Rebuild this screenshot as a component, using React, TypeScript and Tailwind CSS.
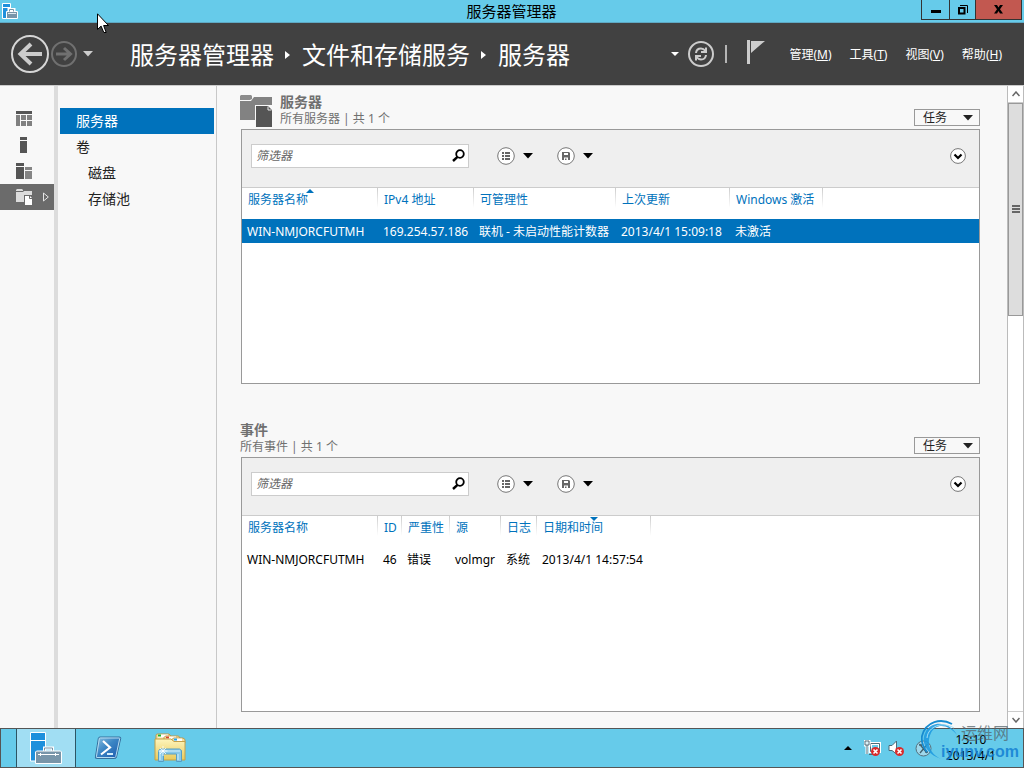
import React from 'react';
import clsx from 'clsx';

type Column = {
  label: string;
  width: string;
  sort?: 'asc' | 'desc';
};

type PanelProps = {
  title: string;
  subtitle: string;
  icon?: React.ReactNode;
  columns: Column[];
  rows: string[][];
  selectedRow?: number;
};

const serverColumns: Column[] = [
  { label: '服务器名称', width: 'w-[136px]', sort: 'asc' },
  { label: 'IPv4 地址', width: 'w-[96px]' },
  { label: '可管理性', width: 'w-[142px]' },
  { label: '上次更新', width: 'w-[114px]' },
  { label: 'Windows 激活', width: 'w-[93px]' },
];

const serverRows = [
  ['WIN-NMJORCFUTMH', '169.254.57.186', '联机 - 未启动性能计数器', '2013/4/1 15:09:18', '未激活'],
];

const eventColumns: Column[] = [
  { label: '服务器名称', width: 'w-[136px]' },
  { label: 'ID', width: 'w-[24px]' },
  { label: '严重性', width: 'w-[48px]' },
  { label: '源', width: 'w-[51px]' },
  { label: '日志', width: 'w-[36px]' },
  { label: '日期和时间', width: 'w-[114px]', sort: 'desc' },
];

const eventRows = [['WIN-NMJORCFUTMH', '46', '错误', 'volmgr', '系统', '2013/4/1 14:57:54']];

const menus = [
  { label: '管理', accessKey: 'M' },
  { label: '工具', accessKey: 'T' },
  { label: '视图', accessKey: 'V' },
  { label: '帮助', accessKey: 'H' },
];

const navItems = [
  { label: '服务器', selected: true },
  { label: '卷' },
  { label: '磁盘', nested: true },
  { label: '存储池', nested: true },
];

const Caret: React.FC<{ className?: string }> = ({ className }) => (
  <svg className={className} width="10" height="6" viewBox="0 0 10 6" fill="currentColor">
    <path d="M0 0h10L5 5.500z" />
  </svg>
);

const CrumbArrow: React.FC = () => (
  <svg width="6" height="8" viewBox="0 0 6 8" fill="#fff">
    <path d="M0 0l5 4-5 4z" />
  </svg>
);

const ServerManagerIcon: React.FC = () => (
  <svg width="32" height="32" viewBox="0 0 32 32">
    <path d="M.5.5h15V29H.5z" fill="#1e90dc" stroke="#fff" />
    <path d="M.5 8.500h15" stroke="#fff" />
    <path d="M14.500 19v-3h8v3" fill="none" stroke="#fff" strokeWidth="3" />
    <path d="M14.500 19v-3h8v3" fill="none" stroke="#7895a9" />
    <path d="M5.500 20l1-1h24l1 1v11.500h-26z" fill="#7895a9" stroke="#fff" />
    <path d="M8 22.500h21M10.500 21v3M25.500 21v3" stroke="#fff" />
  </svg>
);

const ServerManagerSmallIcon: React.FC = () => (
  <svg width="16" height="16" viewBox="0 0 16 16">
    <path d="M.5.5h8v15h-8z" fill="#1e90dc" stroke="#fff" />
    <path d="M.5 4.500h8" stroke="#fff" />
    <path d="M7 8V6.500h5V8" fill="none" stroke="#fff" strokeWidth="3" />
    <path d="M4.500 8.500h11v7h-11z" fill="#7895a9" stroke="#fff" />
    <path d="M7.500 8.500v-2h4v2" fill="none" stroke="#7895a9" />
    <path d="M6 10.500h8" stroke="#dfe8ee" />
  </svg>
);

const PowerShellIcon: React.FC = () => (
  <svg width="30" height="26" viewBox="0 0 30 26">
    <defs>
      <linearGradient id="ps" x1="0" y1="0" x2="1" y2="1">
        <stop offset="0" stopColor="#8ec3e4" />
        <stop offset=".45" stopColor="#3b86c4" />
        <stop offset="1" stopColor="#1b56ad" />
      </linearGradient>
    </defs>
    <path d="M7 2h19.500q1.500 0 1.200 1.500L23.500 22q-.4 1.500-2 1.500H3.500Q2 23.500 2.400 22L5.300 3.500Q5.600 2 7 2z" fill="url(#ps)" stroke="#356f9c" />
    <path d="M7.300 3h18.900q.6 0 .5.600L22.800 21.500q-.2 1-1.200 1H3.900q-.6 0-.5-.7L6.300 3.800q.1-.8 1-.8z" fill="none" stroke="#b5dcf1" />
    <path d="M10 6l7 6.500-9 7" fill="none" stroke="#fff" strokeWidth="2.200" />
    <path d="M14 19h6" stroke="#d5edf9" strokeWidth="2" />
  </svg>
);

const ExplorerIcon: React.FC = () => (
  <svg width="32" height="30" viewBox="0 0 32 30">
    <defs>
      <linearGradient id="folder" x1="0" y1="0" x2="0" y2="1">
        <stop offset="0" stopColor="#fdf5bd" />
        <stop offset="1" stopColor="#e8ca5b" />
      </linearGradient>
    </defs>
    <path d="M2 8V2.500Q2 1 3.500 1H15l2 2v5z" fill="#f5dfa0" stroke="#bd9a4d" />
    <path d="M4 1.500h10v3H4z" fill="#fff" />
    <path d="M4 1.500h3v2H4z" fill="#1db52c" />
    <path d="M10 9V4.500L11.500 3h13l1.500 2v5z" fill="#f5dfa0" stroke="#bd9a4d" />
    <path d="M12 3.500h10v3H12z" fill="#fff" />
    <path d="M12 3.500h3v2h-3z" fill="#d8472a" />
    <path d="M18 10V6.500L19.500 5H29l2 1.500V10z" fill="#f5dfa0" stroke="#bd9a4d" />
    <path d="M20 5.500h8v3h-8z" fill="#fff" />
    <path d="M20 5.500h3v2h-3z" fill="#1ea5ed" />
    <path d="M1 6h16l3 2.500h11V27H1z" fill="url(#folder)" stroke="#c4a048" />
    <path d="M4.500 28.500v-11l2-1.500h19l2 1.500v11h-5V21h-13v7.500z" fill="#88c9e8" stroke="#579ec4" />
    <path d="M6 18h20M6 18v9M24 21v6" stroke="#d4f0fb" />
    <path d="M9 13v10M4.500 18h9M6 15l6 6M12 15l-6 6" stroke="#fff" strokeWidth=".8" />
  </svg>
);

const DashboardIcon: React.FC = () => (
  <svg width="16" height="16" viewBox="0 0 16 16" fill="#808080">
    <path d="M0 0h16v3H0z" fill="#555" />
    <path d="M0 4h4v11H0zM5 4h5v5H5zM11 4h5v5h-5zM5 10h5v5H5zM11 10h5v5h-5z" />
  </svg>
);

const LocalServerIcon: React.FC = () => (
  <svg width="16" height="16" viewBox="0 0 16 16" fill="#555">
    <path d="M4 0h7v3H4zM4 4h7v12H4z" />
  </svg>
);

const AllServersIcon: React.FC = () => (
  <svg width="16" height="16" viewBox="0 0 16 16">
    <path d="M0 0h8v3H0zM0 4h8v12H0z" fill="#555" />
    <path d="M9 4h7v3H9zM9 8h7v8H9z" fill="#858585" />
  </svg>
);

const StorageIcon: React.FC = () => (
  <svg width="16" height="16" viewBox="0 0 16 16">
    <path d="M0 1l1-1h5l1 1v1H0zM0 3h7l1-1h8v4H8v7H0z" fill="#dcdcdc" />
    <path d="M9 7h5l2 2v7H9z" fill="#fff" />
    <path d="M13.500 7v2.500H16" fill="none" stroke="#6b6b6b" />
  </svg>
);

const StorageLargeIcon: React.FC = () => (
  <svg width="32" height="32" viewBox="0 0 32 32">
    <path d="M0 1l1-1h10l1 1v3l-2 1H0z" fill="#8c8c8c" />
    <path d="M0 6h11l3-4h18v8H15v15H0z" fill="#828282" />
    <path d="M16 11h12l4 4v17H16z" fill="#555" />
    <path d="M28 11.500v3.500h3.500" fill="none" stroke="#e8e8e8" />
  </svg>
);

const railItems = [
  { name: '仪表板', icon: <DashboardIcon /> },
  { name: '本地服务器', icon: <LocalServerIcon /> },
  { name: '所有服务器', icon: <AllServersIcon /> },
  { name: '文件和存储服务', icon: <StorageIcon />, selected: true },
];

const TitleBar: React.FC = () => (
  <header className="relative flex h-[23px] shrink-0 items-start border-b border-[#5fa9c4] bg-[#66cbea]">
    <div className="pl-[2px] pt-[3px]">
      <ServerManagerSmallIcon />
    </div>
    <h1 className="flex-1 pl-[84px] text-center text-[15px] leading-[23px] text-black">服务器管理器</h1>
    <div className="mr-[2px] flex h-5 border border-t-0 border-[#333]">
      <button type="button" aria-label="最小化" className="flex w-7 items-center justify-center border-r border-[#333]">
        <svg width="10" height="10" viewBox="0 0 10 10">
          <path d="M0 5h10v3H0z" />
        </svg>
      </button>
      <button type="button" aria-label="还原" className="flex w-[26px] items-center justify-center border-r border-[#333]">
        <svg width="10" height="10" viewBox="0 0 10 10" fill="none" stroke="#000">
          <path d="M1 3h5.500v5.500H1z" strokeWidth="2" />
          <path d="M2 .5h7.500V8" />
        </svg>
      </button>
      <button type="button" aria-label="关闭" className="flex w-[45px] items-center justify-center bg-[#c25850]">
        <svg width="9" height="9" viewBox="0 0 9 9">
          <path d="M0 0h3l1.500 2.500L6 0h3L6 4.300 9 8.500H6L4.500 6 3 8.500H0l3-4.200z" />
        </svg>
      </button>
    </div>
    <svg className="absolute left-[97px] top-[13px] z-10" width="12" height="21" viewBox="0 0 12 21">
      <path d="M.5.8v15.700l3.600-3.400 2.700 6.400h2.400L6.600 12.500h4.900z" fill="#fff" stroke="#000" />
    </svg>
  </header>
);

const CommandBar: React.FC = () => (
  <div className="flex h-[63px] shrink-0 items-center border-b border-[#ccc] bg-[#414141] pl-[11px] pr-[22px] text-white">
    <button type="button" aria-label="后退">
      <svg width="38" height="38" viewBox="0 0 38 38" fill="none">
        <circle cx="19" cy="19" r="18" stroke="#d6d6d6" strokeWidth="2" />
        <path d="M31 19H9M20 9L9.500 19 20 29" stroke="#ccc" strokeWidth="4" />
      </svg>
    </button>
    <button type="button" aria-label="前进" className="ml-[2px]">
      <svg width="26" height="26" viewBox="0 0 26 26" fill="none" stroke="#707070">
        <circle cx="13" cy="13" r="12" strokeWidth="2" />
        <path d="M5 13h14M13 7l6.500 6-6.500 6" strokeWidth="3" />
      </svg>
    </button>
    <button type="button" aria-label="历史记录" className="ml-[6px]">
      <Caret className="text-[#ccc]" />
    </button>
    <nav className="ml-9 flex items-center pt-[2px] pl-px whitespace-nowrap text-2xl">
      <a href="#dashboard">服务器管理器</a>
      <span className="flex w-7 justify-center"><CrumbArrow /></span>
      <a href="#storage">文件和存储服务</a>
      <span className="flex w-7 justify-center"><CrumbArrow /></span>
      <a href="#servers">服务器</a>
    </nav>
    <div className="ml-auto flex items-center">
      <button type="button" aria-label="更多">
        <svg width="8" height="4" viewBox="0 0 8 4" fill="#fff">
          <path d="M0 0h8L4 4z" />
        </svg>
      </button>
      <button type="button" aria-label="刷新" className="ml-[9px]">
        <svg width="26" height="26" viewBox="0 0 26 26" fill="none" stroke="#ccc">
          <circle cx="13" cy="13" r="12" strokeWidth="2" />
          <path d="M8 12q.5-4.500 5-4.500 2.500 0 4.500 2.500M18 14q-.5 4.500-5 4.500-2.500 0-4.500-2.500" strokeWidth="2" />
          <path d="M18 6.500v4.500h-5M8 19.500V15h5" strokeWidth="2" />
        </svg>
      </button>
      <span className="ml-[11px] h-[18px] w-[2px] bg-[#b5b5b5]" />
      <button type="button" aria-label="通知" className="ml-5">
        <svg width="18" height="30" viewBox="0 0 18 30" fill="#ccc">
          <path d="M0 1h3v24H0zM4 2h14L4 14z" />
        </svg>
      </button>
      <ul className="ml-6 flex gap-[18px] pt-[2px] text-xs">
        {menus.map(menu => (
          <li key={menu.accessKey}>
            <button type="button" className="whitespace-nowrap">
              {menu.label}(<u>{menu.accessKey}</u>)
            </button>
          </li>
        ))}
      </ul>
    </div>
  </div>
);

const SideBar: React.FC = () => (
  <>
    <ul className="w-[54px] shrink-0 pt-5">
      {railItems.map(item => (
        <li key={item.name}>
          <button
            type="button"
            aria-label={item.name}
            className={clsx('flex h-[26px] w-full items-center pl-4', item.selected && 'bg-[#6b6b6b]')}
          >
            {item.icon}
            {item.selected && (
              <svg className="ml-[11px]" width="6" height="10" viewBox="0 0 6 10" fill="none" stroke="#e5e5e5">
                <path d="M.5 1v8L5.300 5z" />
              </svg>
            )}
          </button>
        </li>
      ))}
    </ul>
    <nav className="w-[163px] shrink-0 border-l-4 border-r border-l-[#dcdcdc] border-r-[#c8c8c8] px-[2px] pt-[22px] text-sm">
      {navItems.map(item => (
        <a
          key={item.label}
          href="#nav"
          className={clsx(
            'block h-[26px] leading-[26px]',
            item.nested ? 'pl-7' : 'pl-4',
            item.selected ? 'bg-[#0072bc] text-white' : 'text-[#222]',
          )}
        >
          {item.label}
        </a>
      ))}
    </nav>
  </>
);

const FilterBar: React.FC<{ name: string }> = ({ name }) => (
  <div className="flex h-[58px] shrink-0 items-center border-b border-[#ccc] bg-[#efefef] pb-[6px] pl-[9px] pr-[13px]">
    <div className="flex h-6 w-[218px] items-center border border-[#ccc] bg-white pr-[3px]">
      <input
        type="text"
        aria-label={`${name}筛选器`}
        placeholder="筛选器"
        className="min-w-0 flex-1 pl-1 text-xs italic outline-none placeholder:text-[#666]"
      />
      <button type="button" aria-label="搜索">
        <svg width="13" height="13" viewBox="0 0 13 13" fill="none" stroke="#000">
          <circle cx="8" cy="5" r="3.800" strokeWidth="1.800" />
          <path d="M5.500 7.800L1 12" strokeWidth="2.400" />
        </svg>
      </button>
    </div>
    <button type="button" aria-label="视图选项" className="ml-7 flex items-center gap-2">
      <svg width="18" height="18" viewBox="0 0 18 18">
        <circle cx="9" cy="9" r="8.300" fill="#fff" stroke="#777" />
        <path d="M5 5h2v2H5zM8 5h5v2H8zM5 8h2v2H5zM8 8h5v2H8zM5 11h2v2H5zM8 11h5v2H8z" fill="#666" />
      </svg>
      <Caret />
    </button>
    <button type="button" aria-label="保存查询" className="ml-6 flex items-center gap-2">
      <svg width="18" height="18" viewBox="0 0 18 18">
        <circle cx="9" cy="9" r="8.300" fill="#fff" stroke="#777" />
        <path d="M5 5h7l1 1v7H5z" fill="#666" />
        <path d="M7 6h4v2H7zM7 10.500h4V13H9.500v-1.500H8V13H7z" fill="#fff" />
      </svg>
      <Caret />
    </button>
    <button type="button" aria-label="展开" className="ml-auto">
      <svg width="16" height="16" viewBox="0 0 16 16" fill="none">
        <circle cx="8" cy="8" r="7.400" fill="#fff" stroke="#777" />
        <path d="M4.500 6.500L8 10l3.500-3.500" stroke="#000" strokeWidth="2.200" />
      </svg>
    </button>
  </div>
);

const Panel: React.FC<PanelProps> = ({ title, subtitle, icon, columns, rows, selectedRow }) => (
  <section className="flex min-h-0 flex-1 flex-col">
    <div className="flex h-[35px] shrink-0 items-start text-[#707070]">
      {icon && <div className="mr-2 pt-px">{icon}</div>}
      <div>
        <h2 className="text-sm leading-4 font-bold">{title}</h2>
        <p className="text-xs leading-[18px]">{subtitle}</p>
      </div>
      <button
        type="button"
        className="mt-[15px] ml-auto flex h-[17px] w-[66px] items-center justify-between border border-[#999] bg-[#f8f8f8] pl-2 pr-[6px] text-xs leading-[15px] text-[#222]"
      >
        任务
        <Caret />
      </button>
    </div>
    <div className="ml-px flex min-h-0 flex-1 flex-col border border-[#999] bg-white">
      <FilterBar name={title} />
      <table className="w-full table-fixed text-left text-xs text-black">
        <thead>
          <tr className="h-[31px] align-top text-[#0072bc]">
            {columns.map(column => (
              <th
                key={column.label}
                className={clsx(
                  'relative bg-[linear-gradient(to_bottom,#ccc,#fff)] bg-[length:1px_20px] bg-right-top bg-no-repeat pt-1 pl-[6px] font-normal whitespace-nowrap',
                  column.width,
                )}
              >
                {column.label}
                {column.sort && (
                  <svg
                    className={clsx('absolute top-px left-1/2 -translate-x-1/2', column.sort === 'desc' && 'rotate-180')}
                    width="8"
                    height="4"
                    viewBox="0 0 8 4"
                    fill="#0072bc"
                  >
                    <path d="M0 4h8L4 0z" />
                  </svg>
                )}
              </th>
            ))}
            <th />
          </tr>
        </thead>
        <tbody>
          {rows.map((row, index) => (
            <tr key={row[0]} className={clsx('h-6', index === selectedRow && 'bg-[#0072bc] text-white')}>
              {row.map(cell => (
                <td key={cell} className="pt-[2px] pl-[5px] whitespace-nowrap">
                  {cell}
                </td>
              ))}
              <td />
            </tr>
          ))}
        </tbody>
      </table>
    </div>
  </section>
);

const ScrollBar: React.FC = () => (
  <div className="flex w-[17px] shrink-0 flex-col border-x border-[#bbb] bg-white">
    <button type="button" aria-label="向上滚动" className="flex h-[17px] shrink-0 items-center justify-center border-b border-[#ccc]">
      <svg width="8" height="6" viewBox="0 0 8 6" fill="none" stroke="#666" strokeWidth="1.500">
        <path d="M.5 5L4 1l3.500 4" />
      </svg>
    </button>
    <div className="min-h-0 flex-1">
      <div className="flex h-[35%] flex-col items-center justify-center gap-px border border-[#999] bg-[#ddd]">
        <span className="h-[2px] w-2 bg-[#666]" />
        <span className="h-[2px] w-2 bg-[#666]" />
        <span className="h-[2px] w-2 bg-[#666]" />
      </div>
    </div>
    <button type="button" aria-label="向下滚动" className="flex h-[17px] shrink-0 items-center justify-center border-t border-[#ccc]">
      <svg width="8" height="6" viewBox="0 0 8 6" fill="none" stroke="#666" strokeWidth="1.500">
        <path d="M.5 1L4 5l3.500-4" />
      </svg>
    </button>
  </div>
);

const ErrorBadge: React.FC = () => (
  <>
    <circle cx="11.500" cy="11.500" r="4.500" fill="#d92b2b" />
    <path d="M9.500 9.500l4 4M13.500 9.500l-4 4" stroke="#fff" strokeWidth="1.600" />
  </>
);

const TaskBar: React.FC = () => (
  <footer className="relative flex h-10 shrink-0 border border-[#555] bg-[#66cbea]">
    <div className="ml-[15px] flex gap-[2px]">
      <button type="button" aria-label="服务器管理器" className="flex w-[60px] items-center justify-center border-x border-[#2c5564] bg-[#a1def3]">
        <ServerManagerIcon />
      </button>
      <button type="button" aria-label="Windows PowerShell" className="flex w-[60px] items-center justify-center">
        <PowerShellIcon />
      </button>
      <button type="button" aria-label="文件资源管理器" className="flex w-[60px] items-center justify-center">
        <ExplorerIcon />
      </button>
    </div>
    <div className="ml-auto flex items-center pr-[27px]">
      <button type="button" aria-label="显示隐藏的图标">
        <svg width="8" height="4" viewBox="0 0 8 4">
          <path d="M0 4h8L4 0z" />
        </svg>
      </button>
      <svg className="ml-3" width="17" height="17" viewBox="0 0 17 17" fill="none">
        <path d="M6.500 3.500h9v8h-9z" stroke="#fff" strokeWidth="3" />
        <path d="M6.500 3.500h9v8h-9zM5 14.500h6" stroke="#4d6b78" />
        <path d="M1 1h4v4H1zM3 5v9" stroke="#fff" strokeWidth="3" />
        <path d="M1 1h4v4H1zM3 5v9" stroke="#4d6b78" />
        <ErrorBadge />
      </svg>
      <svg className="ml-[7px]" width="17" height="17" viewBox="0 0 17 17" fill="none">
        <path d="M1 5.500h3L8.500 1v13L4 10.500H1z" fill="#fff" stroke="#4d6b78" />
        <ErrorBadge />
      </svg>
      <svg className="ml-[10px]" width="17" height="17" viewBox="0 0 17 17" fill="none">
        <circle cx="8.500" cy="8.500" r="7.500" fill="#9fd8ec" stroke="#55707c" />
        <path d="M4.500 4l7.500 9M12.500 4L5 13M4 5h3M10 12h3" stroke="#41616e" strokeWidth="1.300" />
      </svg>
      <time className="ml-[14px] text-center text-xs text-black">
        15:10
        <br />
        2013/4/1
      </time>
    </div>
    {/* site mark laid over the corner of the tray */}
    <div className="pointer-events-none absolute right-1 -bottom-px h-12 w-[98px]">
      <svg className="absolute left-0 top-0" width="40" height="40" viewBox="0 0 40 40" fill="none">
        <path d="M36 15C29 2 12 0 5 11c-6 11 0 23 15 28C9 34 5 23 10 13 15 3 27 4 36 15z" fill="#1f9be0" fillOpacity=".9" />
        <path d="M31 4C20-2 5 1 1 16c-1 6 1 11 5 16" stroke="#168bd0" strokeWidth="1.800" />
        <path d="M33 8C22 1 7 6 6 18" stroke="#a5e0f7" />
      </svg>
      <span className="absolute left-10 top-0 text-base leading-[26px] text-[#54656d]/75">运维网</span>
      <span className="absolute right-0 bottom-0 font-[Liberation_Sans] text-base leading-8 font-bold text-[#117ed3]/85">
        iyunv.com
      </span>
    </div>
  </footer>
);

const App: React.FC = () => {
  return (
    <div className="flex h-screen flex-col overflow-hidden bg-[#f8f8f8] font-['Noto_Sans','Noto_Sans_CJK_SC',sans-serif]">
      <TitleBar />
      <CommandBar />
      <div className="flex min-h-0 flex-1">
        <SideBar />
        <main className="flex min-w-0 flex-1 flex-col gap-[38px] pt-2 pr-[27px] pb-4 pl-[23px]">
          <Panel
            title="服务器"
            subtitle="所有服务器 | 共 1 个"
            icon={<StorageLargeIcon />}
            columns={serverColumns}
            rows={serverRows}
            selectedRow={0}
          />
          <Panel title="事件" subtitle="所有事件 | 共 1 个" columns={eventColumns} rows={eventRows} />
        </main>
        <ScrollBar />
      </div>
      <TaskBar />
    </div>
  );
};

export default App;
